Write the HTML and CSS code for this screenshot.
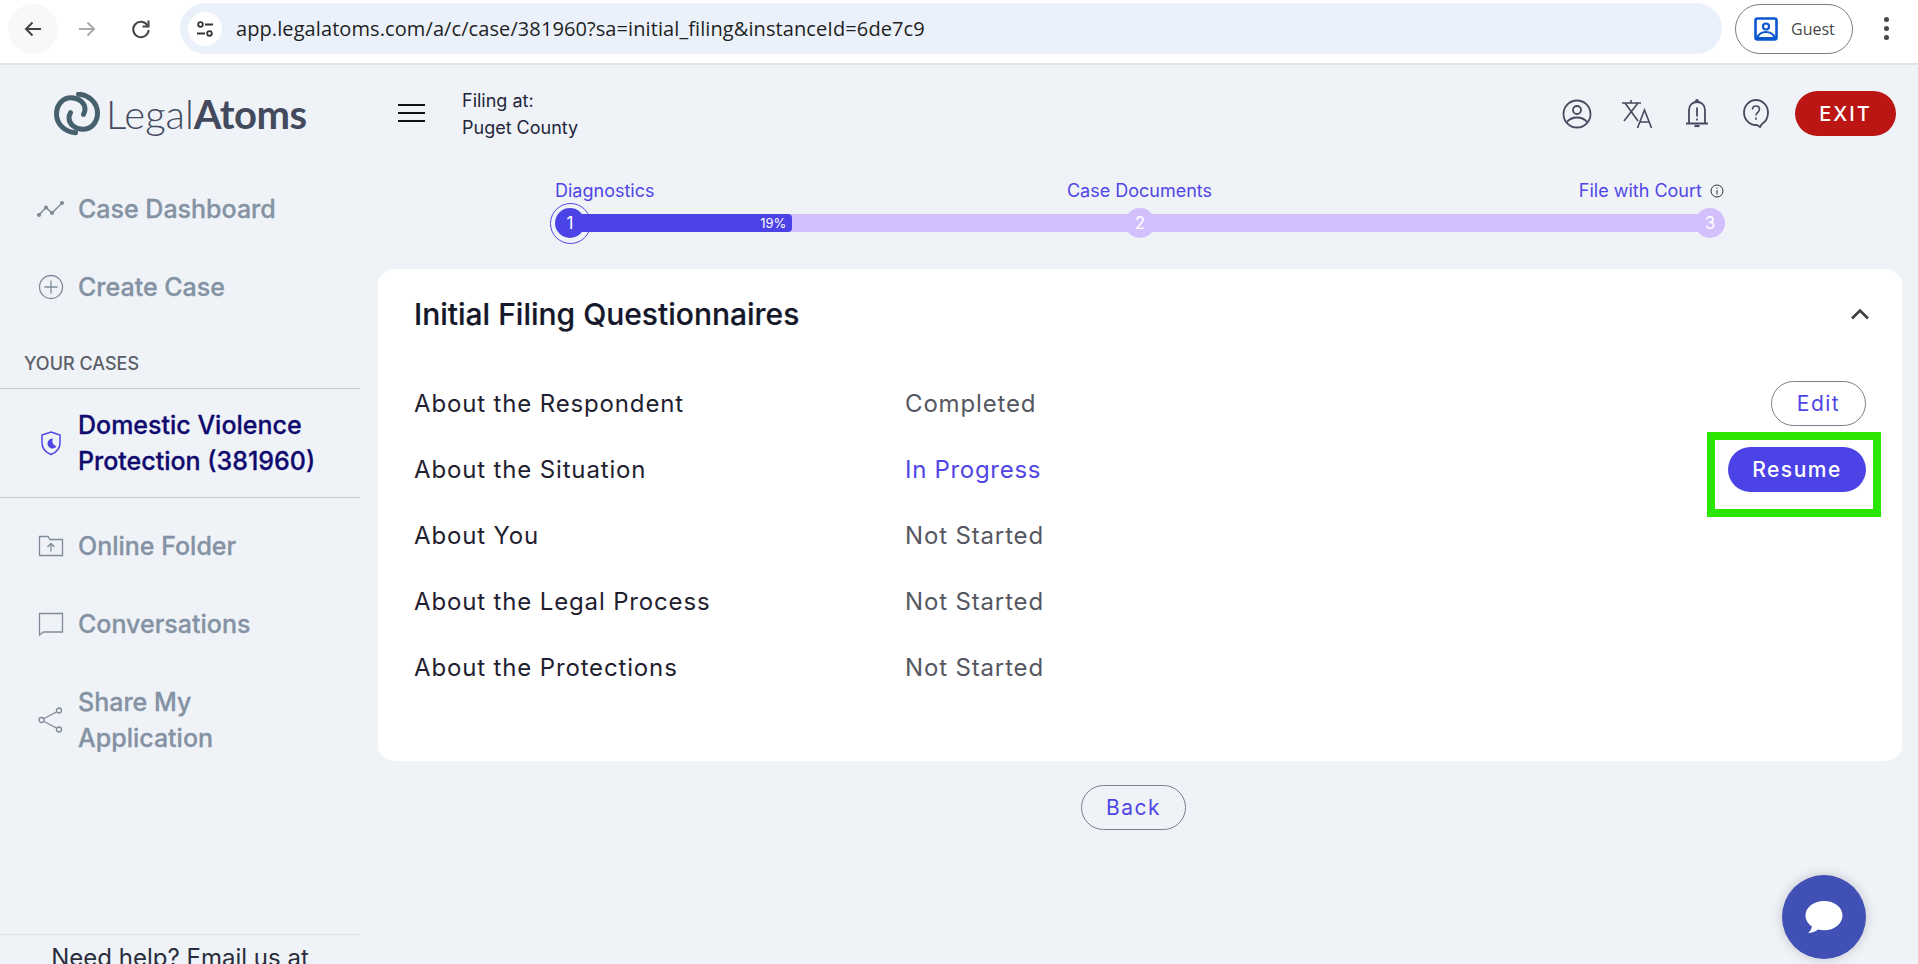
FILE: index.html
```html
<!DOCTYPE html>
<html lang="en">
<head>
    <meta charset="UTF-8">
    <title>LegalAtoms - Initial Filing</title>
    <link rel="stylesheet" href="styles.css">
</head>
<body>
    <div class="browser-bar">
        <div class="nav-btn nav-back">
            <svg width="24" height="24" viewBox="0 0 24 24" fill="none" stroke="#444" stroke-width="2"><path d="M20 12H5M11.500 5.500 5 12l6.500 6.500"/></svg>
        </div>
        <div class="nav-btn">
            <svg width="24" height="24" viewBox="0 0 24 24" fill="none" stroke="#a9a9a9" stroke-width="2"><path d="M4 12h15M12.500 5.500 19 12l-6.500 6.500"/></svg>
        </div>
        <div class="nav-btn">
            <svg width="24" height="24" viewBox="0 0 24 24" fill="none" stroke="#444" stroke-width="2"><path d="M18.500 8.500A7.700 7.700 0 1 0 19.600 13"/><path d="M19.500 3.500v6h-6" /></svg>
        </div>
        <div class="url-bar">
            <span class="site-info">
                <svg width="20" height="20" viewBox="0 0 20 20" fill="none" stroke="#333" stroke-width="1.800"><circle cx="5.500" cy="5.500" r="2.300"/><path d="M10 5.500h8M2 14.500h8"/><circle cx="14.500" cy="14.500" r="2.300"/></svg>
            </span>
            <span class="url-text">app.legalatoms.com/a/c/case/381960?sa=initial_filing&amp;instanceId=6de7c9</span>
        </div>
        <div class="guest-pill">
            <svg width="24" height="24" viewBox="0 0 24 24"><rect x="1.500" y="1.500" width="21" height="21" rx="2" fill="none" stroke="#0b57d0" stroke-width="2.600"/><circle cx="12" cy="9.500" r="3" fill="none" stroke="#0b57d0" stroke-width="2.200"/><path d="M3 21c2-5 5-6 9-6s7 1 9 6z" fill="none" stroke="#0b57d0" stroke-width="2.200"/></svg>
            <span>Guest</span>
        </div>
        <div class="kebab"><i></i><i></i><i></i></div>
    </div>

    <div class="app-header">
        <div class="logo">
            <svg width="46" height="44" viewBox="0 0 46 44" fill="none" stroke="#46606e" stroke-width="5" stroke-linecap="round">
                <path d="M21.500 40.800C10.500 40 2.500 32 2.500 22 2.500 12.500 9 5.700 17 5.700 25 5.700 31 11 31 17c0 2-.5 3.700-1.500 5.300"/>
                <path d="M24.500 2.200C35.500 3 43.500 11 43.500 21 43.500 30.500 37 37.300 29 37.300 21 37.300 15 32 15 26c0-2 .5-3.700 1.500-5.300"/>
            </svg>
            <span class="logo-text">Legal<b>Atoms</b></span>
        </div>
        <div class="hamburger"><i></i><i></i><i></i></div>
        <div class="filing-at">
            <div>Filing at:</div>
            <div>Puget County</div>
        </div>
        <div class="header-actions">
            <svg class="act-user" width="30" height="30" viewBox="0 0 30 30" fill="none" stroke="#454a5e" stroke-width="1.800"><circle cx="15" cy="15" r="13.500"/><circle cx="15" cy="11" r="4"/><path d="M4.500 23.500C8 19 11 18.500 15 18.500s7 .5 10.500 5"/></svg>
            <svg class="act-lang" width="32" height="30" viewBox="0 0 32 30" fill="none" stroke="#454a5e" stroke-width="1.600"><path d="M1 4h19M10 1v3M4 4l13 18M17 4 3 22M16.500 29 23.500 11l7 18M19 23h9"/></svg>
            <svg class="act-bell" width="24" height="30" viewBox="0 0 24 30" fill="none" stroke="#454a5e" stroke-width="1.800"><path d="M1 24.500h22M4 24.500V11c0-5 3.500-8 8-8s8 3 8 8v13.500"/><path d="M12 8.500v9M12 19.500v2"/><circle cx="12" cy="2" r="1" fill="#454a5e"/><path d="M9.500 27h5" stroke-width="2.200"/></svg>
            <svg class="act-help" width="26" height="30" viewBox="0 0 26 30" fill="none" stroke="#454a5e" stroke-width="1.800"><path d="M15 26.500c-.5-.3-1-.5-2-.5C6.500 26 1 20.500 1 13.500S6.500 1 13 1s12 5.500 12 12.500c0 5-2 9-6 11.500l-2 3z"/><path d="M9.500 10.500c0-2 1.500-3.500 3.500-3.500s3.500 1.500 3.500 3.300c0 3-3.500 3-3.500 6.200M13 18.500v2.200" stroke-width="1.600"/></svg>
            <button class="exit-btn">EXIT</button>
        </div>
    </div>

    <div class="app-body">
        <div class="sidebar">
            <a class="side-item">
                <svg width="28" height="20" viewBox="0 0 28 20" fill="none" stroke="#7f8b99" stroke-width="1.500"><path d="M2 16 9 8.500l6 5.500L25 4"/><circle cx="2" cy="16" r="1.300" fill="#7f8b99"/><circle cx="9" cy="8.500" r="1.300" fill="#7f8b99"/><circle cx="15" cy="14" r="1.300" fill="#7f8b99"/><circle cx="25" cy="4" r="1.300" fill="#7f8b99"/></svg>
                <span>Case Dashboard</span>
            </a>
            <a class="side-item">
                <svg width="28" height="26" viewBox="0 0 26 26" fill="none" stroke="#7f8b99" stroke-width="1.300"><circle cx="13" cy="13" r="11.500"/><path d="M13 6.500v13M6.500 13h13"/></svg>
                <span>Create Case</span>
            </a>
            <div class="side-label">YOUR CASES</div>
            <a class="side-item side-active">
                <svg width="28" height="26" viewBox="0 0 28 26" fill="none"><path d="M14 2 23 5v8c0 6-4 9.500-9 11.500C9 22.500 5 19 5 13V5z" stroke="#4f46e5" stroke-width="1.500"/><path d="M16 8.500a5 5 0 1 0 3.500 8A5.500 5.500 0 0 1 16 8.500z" fill="#4f46e5"/></svg>
                <span>Domestic Violence<br>Protection (381960)</span>
            </a>
            <a class="side-item side-after">
                <svg width="28" height="22" viewBox="0 0 26 22" fill="none" stroke="#7f8b99" stroke-width="1.300"><path d="M1.500 20V1.500h8.500l2 3h12.500V20.500H1.500z"/><path d="M13 16.500V8.500M9.500 12 13 8.500l3.500 3.500"/></svg>
                <span>Online Folder</span>
            </a>
            <a class="side-item">
                <svg width="28" height="24" viewBox="0 0 26 24" fill="none" stroke="#7f8b99" stroke-width="1.300"><path d="M1.500 1.500h23v18.500H5.500l-4 3z"/></svg>
                <span>Conversations</span>
            </a>
            <a class="side-item side-tall">
                <svg width="28" height="26" viewBox="0 0 26 26" fill="none" stroke="#7f8b99" stroke-width="1.300"><circle cx="3.500" cy="13" r="2.500"/><circle cx="21" cy="3.500" r="2.500"/><circle cx="21" cy="22.500" r="2.500"/><path d="M5.700 11.800 18.800 4.700M5.700 14.200l13.100 7.100"/></svg>
                <span>Share My<br>Application</span>
            </a>
            <div class="side-help">Need help? Email us at</div>
        </div>

        <div class="main">
            <div class="stepper">
                <div class="step-labels">
                    <span>Diagnostics</span>
                    <span>Case Documents</span>
                    <span class="step-last">File with Court
                        <svg width="14" height="14" viewBox="0 0 14 14" fill="none" stroke="#333" stroke-width="1"><circle cx="7" cy="7" r="6"/><path d="M7 6v4.500M7 3.500v1.200"/></svg>
                    </span>
                </div>
                <div class="track">
                    <span class="step-ring"></span>
                    <div class="track-fill" style="width: 19.5%">19%</div>
                    <span class="step-dot step-dot-first">1</span>
                    <span class="step-dot step-dot-mid">2</span>
                    <span class="step-dot step-dot-end">3</span>
                </div>
            </div>

            <div class="card">
                <div class="card-head">
                    <h2>Initial Filing Questionnaires</h2>
                    <svg width="20" height="12" viewBox="0 0 20 12" fill="none" stroke="#3c4043" stroke-width="2.600"><path d="M2 10.500 10 2.500l8 8"/></svg>
                </div>
                <div class="q-row">
                    <span>About the Respondent</span>
                    <span class="q-status">Completed</span>
                    <button class="btn-outline btn-edit">Edit</button>
                </div>
                <div class="q-row">
                    <span>About the Situation</span>
                    <span class="q-status q-progress">In Progress</span>
                    <div class="resume-wrap">
                        <button class="btn-solid">Resume</button>
                        <div class="highlight"></div>
                    </div>
                </div>
                <div class="q-row">
                    <span>About You</span>
                    <span class="q-status">Not Started</span>
                </div>
                <div class="q-row">
                    <span>About the Legal Process</span>
                    <span class="q-status">Not Started</span>
                </div>
                <div class="q-row">
                    <span>About the Protections</span>
                    <span class="q-status">Not Started</span>
                </div>
            </div>

            <div class="back-row">
                <button class="btn-outline btn-back">Back</button>
            </div>
        </div>
    </div>

    <div class="chat-fab">
        <svg width="40" height="36" viewBox="0 0 40 36"><path d="M20 2C9.500 2 1.500 8.500 1.500 16.500c0 4.500 2.500 8.500 6.500 11-.5 2.500-2 5-4 6.500 4 0 7.500-1.500 10-3.500 2 .5 4 .8 6 .8 10.500 0 18.500-6.500 18.500-14.800S30.500 2 20 2z" fill="#fff"/></svg>
    </div>
</body>
</html>
```

FILE: styles.css
```css
* {
    margin: 0;
    padding: 0;
    box-sizing: border-box;
}

html, body {
    height: 964px;
    overflow: hidden;
}

body {
    font-family: Inter, "Liberation Sans", sans-serif;
    background: #eff3f8;
    color: #1f2130;
}

button {
    font-family: inherit;
    cursor: pointer;
}

/* browser chrome */
.browser-bar {
    height: 65px;
    background: #fff;
    border-bottom: 2px solid #e2e3e1;
    display: flex;
    align-items: center;
    padding: 0 0 6px 8px;
}

.nav-btn {
    width: 50px;
    height: 50px;
    margin-right: 4px;
    display: flex;
    align-items: center;
    justify-content: center;
    border-radius: 50%;
}

.nav-back {
    background: #f8f8f8;
}

.url-bar {
    margin-left: 10px;
    width: 1542px;
    height: 51px;
    background: #ebf1fa;
    border-radius: 26px;
    display: flex;
    align-items: center;
    padding-left: 8px;
}

.site-info {
    width: 34px;
    height: 34px;
    border-radius: 50%;
    background: #fff;
    display: flex;
    align-items: center;
    justify-content: center;
    margin-right: 14px;
}

.url-text {
    font-family: "Open Sans", sans-serif;
    font-size: 20px;
    letter-spacing: 0.09px;
    color: #1f1f1f;
}

.guest-pill {
    margin-left: 13px;
    width: 118px;
    height: 50px;
    border: 1.500px solid #7d7d7d;
    border-radius: 25px;
    display: flex;
    align-items: center;
    padding-left: 18px;
    gap: 13px;
    font-family: "Open Sans", sans-serif;
    font-size: 16px;
    color: #474747;
}

.kebab {
    margin-left: 31px;
    display: flex;
    flex-direction: column;
    gap: 4px;
}

.kebab i {
    width: 5px;
    height: 5px;
    border-radius: 50%;
    background: #474747;
}

/* app header */
.app-header {
    height: 104px;
    display: flex;
    align-items: flex-start;
}

.logo {
    width: 398px;
    padding: 25px 0 0 54px;
    display: flex;
    align-items: center;
    gap: 6px;
}

.logo-text {
    font-family: Lato, sans-serif;
    font-size: 40px;
    font-weight: 300;
    color: #434a5e;
}

.logo-text b {
    font-weight: 700;
    letter-spacing: -0.5px;
}

.hamburger {
    width: 64px;
    padding-top: 39px;
}

.hamburger i {
    display: block;
    width: 27px;
    height: 2px;
    background: #111;
    margin-bottom: 6px;
}

.filing-at {
    padding-top: 22px;
    font-size: 18px;
    line-height: 27px;
    color: #23253a;
}

.header-actions {
    margin-left: auto;
    padding: 26px 22px 0 0;
    display: flex;
    align-items: center;
}

.act-user { margin-right: 29px; }
.act-lang { margin-right: 32px; }
.act-bell { margin-right: 34px; }
.act-help { margin-right: 26px; }

.exit-btn {
    width: 101px;
    height: 45px;
    border: none;
    border-radius: 23px;
    background: #bb1614;
    color: #fff;
    font-size: 20px;
    font-weight: 500;
    letter-spacing: 2px;
}

/* sidebar */
.app-body {
    display: flex;
    height: 795px;
}

.sidebar {
    width: 360px;
    flex-shrink: 0;
    padding-top: 1px;
    display: flex;
    flex-direction: column;
    overflow: hidden;
}

.side-item {
    display: flex;
    align-items: center;
    gap: 13px;
    padding: 21px 0 21px 37px;
    font-size: 25px;
    line-height: 36px;
    font-weight: 500;
    color: #8492a3;
    -webkit-text-stroke: 0.3px currentColor;
}

.side-label {
    height: 63px;
    padding: 27px 0 0 24px;
    font-size: 18px;
    line-height: 22px;
    font-weight: 500;
    color: #5d5f68;
    border-bottom: 1.500px solid #c5c8cf;
}

.side-active {
    padding-top: 18px;
    padding-bottom: 18px;
    color: #0f0a6e;
    border-bottom: 1.500px solid #c5c8cf;
}

.side-after {
    margin-top: 9px;
}

.side-help {
    margin-top: auto;
    height: 30px;
    flex-shrink: 0;
    padding-top: 6px;
    border-top: 1px solid #dfe2e8;
    text-align: center;
    font-size: 24px;
    line-height: 34px;
    color: #2a2d3c;
}

/* main column */
.main {
    flex: 1;
    padding: 0 16px 0 18px;
}

.stepper {
    height: 100px;
    margin: 0 192px 0 177px;
    padding-top: 10px;
}

.step-labels {
    display: grid;
    grid-template-columns: 1fr auto 1fr;
    font-size: 18px;
    line-height: 24px;
    color: #4f46e5;
    margin-right: -14px;
}

.step-last {
    justify-self: end;
    white-space: nowrap;
}

.step-last svg {
    vertical-align: -1px;
    margin-left: 3px;
}

.track {
    position: relative;
    height: 18px;
    margin: 11px 0 0 15px;
    background: #d2bffc;
}

.track-fill {
    position: relative;
    height: 18px;
    background: #4c43e6;
    border-radius: 0 4px 4px 0;
    color: #fff;
    font-size: 13px;
    line-height: 19px;
    text-align: right;
    padding-right: 6px;
}

.step-ring {
    position: absolute;
    left: -20px;
    top: -11px;
    width: 41px;
    height: 41px;
    border: 1px solid #4f46e5;
    border-radius: 50%;
}

.step-dot {
    position: absolute;
    top: -6px;
    width: 30px;
    height: 30px;
    margin-left: -15px;
    border-radius: 50%;
    background: #d2bffc;
    color: #fff;
    font-size: 17px;
    line-height: 30px;
    text-align: center;
}

.step-dot-first {
    left: 0;
    background: #4c43e6;
}

.step-dot-mid { left: 50%; }
.step-dot-end { left: 100%; }

.card {
    background: #fff;
    border-radius: 16px;
    height: 492px;
    padding: 0 36px 0 36px;
}

.card-head {
    height: 90px;
    margin-bottom: 11px;
    display: flex;
    align-items: center;
    justify-content: space-between;
    margin-right: -4px;
}

.card-head h2 {
    font-size: 30px;
    font-weight: 500;
    color: #15172a;
    -webkit-text-stroke: 0.2px currentColor;
}

.q-row {
    height: 66px;
    display: grid;
    grid-template-columns: 491px 1fr auto;
    align-items: center;
    font-size: 24px;
    letter-spacing: 0.85px;
}

.q-status {
    color: #555761;
}

.q-progress {
    color: #4f46e5;
    letter-spacing: 0.7px;
}

.btn-outline {
    height: 45px;
    border: 1px solid #7b7d8c;
    border-radius: 23px;
    background: transparent;
    color: #4f46e5;
    font-size: 21px;
    letter-spacing: 1.500px;
}

.btn-edit {
    width: 95px;
}

.btn-back {
    width: 105px;
}

.resume-wrap {
    position: relative;
}

.btn-solid {
    display: block;
    width: 138px;
    height: 45px;
    border: none;
    border-radius: 23px;
    background: #4c43e6;
    color: #fff;
    font-size: 21px;
    font-weight: 500;
    letter-spacing: 1.500px;
}

.highlight {
    position: absolute;
    left: -21px;
    top: -15px;
    width: 174px;
    height: 85px;
    border: 8px solid #2ae600;
}

.back-row {
    padding: 24px 0 0 703px;
}

/* chat bubble */
.chat-fab {
    position: fixed;
    right: 52px;
    bottom: 5px;
    width: 84px;
    height: 84px;
    border-radius: 50%;
    background: #4050b5;
    box-shadow: 0 0 12px rgba(0, 0, 0, 0.2);
    display: flex;
    align-items: center;
    justify-content: center;
}
```
